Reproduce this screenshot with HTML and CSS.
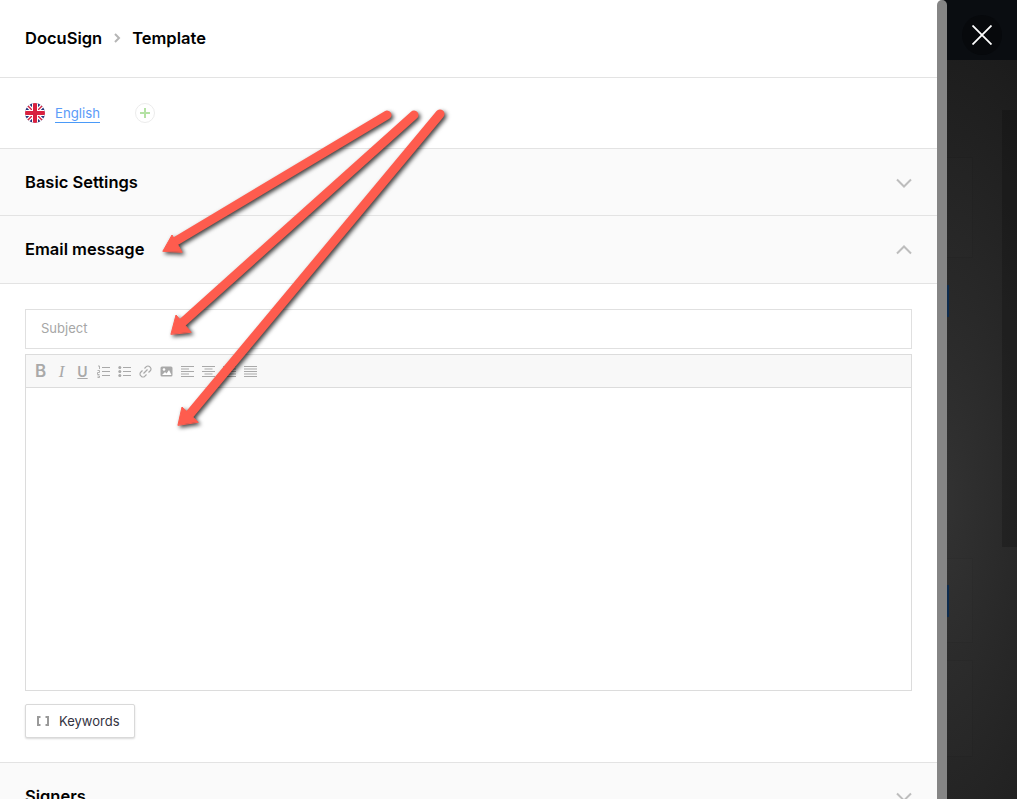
FILE: index.html
```html
<!DOCTYPE html>
<html lang="en">
<head>
<meta charset="utf-8">
<title>DocuSign Template</title>
<link rel="stylesheet" href="styles.css">
</head>
<body>
<div class="screen">
  <main class="panel">
    <header class="crumbs">
      <span>DocuSign</span>
      <svg class="crumb-sep" width="8" height="12" viewBox="0 0 8 12"><path d="M2 2l4 4-4 4" fill="none" stroke="#b5b5b5" stroke-width="2"/></svg>
      <span>Template</span>
    </header>
    <div class="langs">
      <svg class="flag" width="20" height="20" viewBox="0 0 20 20">
        <defs><clipPath id="c"><circle cx="10" cy="10" r="10"/></clipPath></defs>
        <g clip-path="url(#c)">
          <rect width="20" height="20" fill="#26347c"/>
          <path d="M0 0L20 20M20 0L0 20" stroke="#fff" stroke-width="4"/>
          <path d="M0 0L20 20M20 0L0 20" stroke="#d8213f" stroke-width="1.4"/>
          <path d="M10 0V20M0 10H20" stroke="#fff" stroke-width="6"/>
          <path d="M10 0V20M0 10H20" stroke="#d8213f" stroke-width="4"/>
        </g>
      </svg>
      <a class="lang-link">English</a>
      <span class="lang-add">
        <svg width="12" height="12" viewBox="0 0 12 12"><path d="M6 1v10M1 6h10" stroke="#b4e2a4" stroke-width="2"/></svg>
      </span>
    </div>
    <section class="acc">
      <h2>Basic Settings</h2>
      <svg class="chev" width="16" height="10" viewBox="0 0 16 10"><path d="M1 1.500l7 7 7-7" fill="none" stroke="#bdbdbd" stroke-width="2"/></svg>
    </section>
    <section class="acc acc-open">
      <h2>Email message</h2>
      <svg class="chev" width="16" height="10" viewBox="0 0 16 10"><path d="M1 8.500l7-7 7 7" fill="none" stroke="#bdbdbd" stroke-width="2"/></svg>
    </section>
    <div class="body">
      <div class="subject">Subject</div>
      <div class="editor">
        <div class="toolbar">
          <span class="tool tool-b">B</span>
          <span class="tool tool-i">I</span>
          <span class="tool tool-u">U</span>
          <svg class="ico" width="13" height="13" viewBox="0 0 13 13"><path d="M5 2.500h8M5 6.500h8M5 10.500h8" stroke="#a9a9a9"/><path d="M1 1h1.500v3M0.500 5.500h2v2h-2v2h2M0.500 11h2v1.500h-2" fill="none" stroke="#a9a9a9" stroke-width=".9"/></svg>
          <svg class="ico" width="13" height="13" viewBox="0 0 13 13"><path d="M5 2.500h8M5 6.500h8M5 10.500h8" stroke="#a9a9a9"/><circle cx="1.800" cy="2.500" r="1.500" fill="#a9a9a9"/><circle cx="1.800" cy="6.500" r="1.500" fill="#a9a9a9"/><circle cx="1.800" cy="10.500" r="1.500" fill="#a9a9a9"/></svg>
          <svg class="ico" width="13" height="13" viewBox="0 0 13 13"><path d="M5.500 3.500l1.800-1.800a2.300 2.300 0 0 1 3.300 0l.7.700a2.300 2.300 0 0 1 0 3.300L9.500 7.500M7.500 9.500l-1.800 1.800a2.300 2.300 0 0 1-3.300 0l-.7-.7a2.300 2.300 0 0 1 0-3.300L3.500 5.500M4.500 8.500l4-4" fill="none" stroke="#a9a9a9" stroke-width="1.200"/></svg>
          <svg class="ico" width="13" height="13" viewBox="0 0 13 13"><rect x="0.500" y="1.500" width="12" height="10" rx="1.500" fill="#a9a9a9"/><circle cx="4" cy="4.500" r="1.300" fill="#fff"/><path d="M2 10l3-3 1.500 1.500L9 5l2.500 5z" fill="#fff"/></svg>
          <svg class="ico" width="13" height="13" viewBox="0 0 13 13"><path d="M0 1.500h13M0 4h8M0 6.500h13M0 9h8M0 11.500h13" stroke="#a9a9a9"/></svg>
          <svg class="ico" width="13" height="13" viewBox="0 0 13 13"><path d="M0 1.500h13M2.500 4h8M0 6.500h13M2.500 9h8M0 11.500h13" stroke="#a9a9a9"/></svg>
          <svg class="ico" width="13" height="13" viewBox="0 0 13 13"><path d="M0 1.500h13M5 4h8M0 6.500h13M5 9h8M0 11.500h13" stroke="#a9a9a9"/></svg>
          <svg class="ico" width="13" height="13" viewBox="0 0 13 13"><path d="M0 1.500h13M0 4h13M0 6.500h13M0 9h13M0 11.500h13" stroke="#a9a9a9"/></svg>
        </div>
        <div class="editor-area"></div>
      </div>
      <button class="keywords">
        <svg class="brackets" width="12" height="10" viewBox="0 0 12 10"><path d="M3.500 1H1v8h2.500M8.500 1H11v8H8.500" fill="none" stroke="#9a9a9a" stroke-width="2"/></svg>
        Keywords
      </button>
    </div>
    <section class="acc acc-last">
      <h2>Signers</h2>
      <svg class="chev" width="16" height="10" viewBox="0 0 16 10"><path d="M1 1.500l7 7 7-7" fill="none" stroke="#bdbdbd" stroke-width="2"/></svg>
    </section>
  </main>
  <div class="scrollbar"><div class="thumb"></div></div>
  <aside class="backdrop">
    <div class="backdrop-top">
      <button class="close">
        <svg width="20" height="20" viewBox="0 0 20 20"><path d="M0.500 0.500l19 19M19.500 0.500l-19 19" stroke="#fff" stroke-width="1.800"/></svg>
      </button>
    </div>
    <div class="backdrop-body">
      <div class="ghost ghost-a"></div>
      <div class="ghost ghost-b"></div>
      <div class="ghost ghost-c"></div>
      <div class="ghost-col"></div>
      <div class="ghost-blue ghost-blue-a"></div>
      <div class="ghost-blue ghost-blue-b"></div>
    </div>
  </aside>
  <svg class="arrows" width="1017" height="799" viewBox="0 0 1017 799">
    <g fill="#fe5c4e" stroke="#fe5c4e" stroke-linecap="round" stroke-linejoin="round">
      <path d="M387 115L176 241" fill="none" stroke-width="9"/>
      <path d="M163 251L172 235L182 252Z" stroke-width="1"/>
      <path d="M414 115L183 322" fill="none" stroke-width="9"/>
      <path d="M171 334L176 315L191 332Z" stroke-width="1"/>
      <path d="M440 114L190 414" fill="none" stroke-width="9"/>
      <path d="M178 425L182 407L198 422Z" stroke-width="1"/>
    </g>
  </svg>
</div>
</body>
</html>
```
FILE: styles.css
```css
* { box-sizing: border-box; }
html, body { margin: 0; height: 100%; overflow: hidden; }
body { font-family: Inter, "Liberation Sans", sans-serif; background: #fff; }
.screen { position: relative; display: flex; width: 1017px; height: 799px; overflow: hidden; }

.panel { width: 937px; flex: none; background: #fff; color: #000; }

.crumbs { display: flex; align-items: center; height: 78px; padding: 0 25px 2px; border-bottom: 1px solid #e3e3e3; font-size: 16.500px; font-weight: 600; }
.crumb-sep { margin: 0 11px 0 11px; }

.langs { display: flex; align-items: center; height: 71px; padding: 0 25px 1px; border-bottom: 1px solid #e3e3e3; }
.flag { display: block; }
.lang-link { margin: 2px 0 0 10px; color: #5b9bf8; font-size: 13.200px; line-height: 18px; border-bottom: 1px solid #4a9af8; }
.lang-add { display: flex; align-items: center; justify-content: center; width: 20px; height: 20px; margin-left: 35px; border: 1px solid #ececec; border-radius: 50%; }

.acc { display: flex; align-items: center; justify-content: space-between; height: 67px; padding: 0 25px; background: #fafafa; border-bottom: 1px solid #e3e3e3; }
.acc-open { height: 68px; padding-bottom: 1px; }
.acc h2 { margin: 0; font-size: 16.500px; font-weight: 600; color: #000; }
.chev { display: block; margin-top: 1px; }

.body { height: 479px; padding: 25px 25px 0; border-bottom: 1px solid #e3e3e3; }
.subject { height: 40px; padding: 0 15px; line-height: 37px; border: 1px solid #e0e0e0; font-size: 13px; color: #a6a6a6; }
.editor { height: 337px; margin-top: 5px; border: 1px solid #dcdcdc; display: flex; flex-direction: column; }
.toolbar { display: flex; align-items: center; gap: 8px; height: 33px; padding: 0 8px; background: #f8f8f8; border-bottom: 1px solid #dcdcdc; }
.tool { width: 13px; text-align: center; line-height: 15px; color: #a9a9a9; }
.tool-b { font-size: 17px; font-weight: 600; }
.tool-i { font-size: 17px; font-style: italic; font-family: "Liberation Serif", serif; }
.tool-u { text-decoration: underline; font-weight: 600; font-size: 14px; }
.ico { display: block; flex: none; }
.editor-area { flex: 1; background: #fff; }

.keywords { display: flex; align-items: center; height: 34px; margin-top: 13px; width: 110px; padding: 0 0 0 11px; background: #fff; border: 1px solid #d9d9d9; border-radius: 2px; box-shadow: 0 1px 2px rgba(0,0,0,.15); font: 400 13px Inter, sans-serif; color: #33333f; }
.brackets { display: block; flex: none; margin-right: 10px; }

.scrollbar { width: 10px; flex: none; background: linear-gradient(to right, #fff 50%, #090c10 50%); }
.thumb { height: 100%; background: #858585; border-radius: 5px 5px 0 0; }

.backdrop { flex: 1; display: flex; flex-direction: column; background: #1c1c1c; }
.backdrop-top { display: flex; align-items: center; justify-content: center; height: 60px; padding-top: 10px; background: #0a0d11; }
.close { display: flex; align-items: center; justify-content: center; width: 40px; height: 40px; padding: 0; border: 0; border-radius: 50%; background: #07090c; }
.backdrop-body { position: relative; flex: 1; background: radial-gradient(ellipse 190px 520px at -10px 440px, #333 0%, #1a1a1a 100%); }
.ghost { position: absolute; left: 0; width: 26px; background: rgba(255,255,255,.008); border: solid rgba(0,0,0,.06); border-width: 1px 1px 1px 0; }
.ghost-a { top: 97px; height: 101px; }
.ghost-b { top: 498px; height: 85px; }
.ghost-c { top: 600px; height: 97px; }
.ghost-col { position: absolute; left: 55px; top: 50px; width: 15px; height: 437px; background: rgba(0,0,0,.18); }
.ghost-blue { position: absolute; left: 0; width: 2px; height: 32px; background: #0c2a4c; }
.ghost-blue-a { top: 225px; }
.ghost-blue-b { top: 525px; }

.arrows { position: absolute; left: 0; top: 0; filter: drop-shadow(2px 2px 2px rgba(0,0,0,.75)); pointer-events: none; }
```
